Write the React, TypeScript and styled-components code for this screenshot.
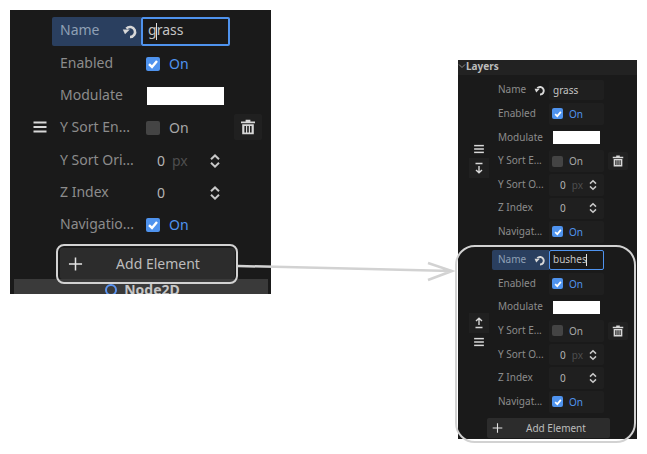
import React from 'react';
import styled, { createGlobalStyle, ThemeProvider } from 'styled-components';

type Sizes = {
  font: number;
  rowH: number;
  nameH: number;
  nameGap: number;
  nameLift: number;
  inputBorder: number;
  labelW: number;
  valueW: number;
  labelPad: number;
  valuePad: number;
  check: number;
  checkGap: number;
  swatchH: number;
  swatchInset: number;
  numPad: number;
  unitGap: number;
  handleW: number;
  handlePad: number;
  sideW: number;
  sideLift: number;
};

const large: Sizes = {
  font: 14,
  rowH: 32.2,
  nameH: 29,
  nameGap: 2,
  nameLift: 4,
  inputBorder: 2,
  labelW: 89,
  valueW: 89,
  labelPad: 8,
  valuePad: 5,
  check: 14,
  checkGap: 9,
  swatchH: 18,
  swatchInset: 6,
  numPad: 16,
  unitGap: 7,
  handleW: 42,
  handlePad: 18,
  sideW: 36,
  sideLift: 4,
};

const small: Sizes = {
  font: 10,
  rowH: 23.6,
  nameH: 20,
  nameGap: 2.2,
  nameLift: 2,
  inputBorder: 1.5,
  labelW: 57,
  valueW: 55,
  labelPad: 6,
  valuePad: 3,
  check: 11,
  checkGap: 6,
  swatchH: 13,
  swatchInset: 4,
  numPad: 11,
  unitGap: 6,
  handleW: 34,
  handlePad: 8,
  sideW: 28,
  sideLift: 2,
};

const GlobalStyle = createGlobalStyle`
  html, body {
    margin: 0;
    padding: 0;
    background: #fff;
  }
  body {
    font-family: "Noto Sans", "Liberation Sans", sans-serif;
  }
`;

const Page = styled.div`
  position: relative;
  width: 647px;
  height: 454px;
  overflow: hidden;
  background: #fff;
`;

const Window = styled.div<{ $x: number; $y: number; $w: number; $h: number }>`
  position: absolute;
  left: ${(p) => p.$x}px;
  top: ${(p) => p.$y}px;
  width: ${(p) => p.$w}px;
  height: ${(p) => p.$h}px;
  box-sizing: border-box;
  overflow: hidden;
  display: flex;
  flex-direction: column;
  background: #1a1a1a;
`;

const LargeBody = styled.div`
  padding-top: 7px;
  display: flex;
  flex-direction: column;
`;

const Block = styled.div`
  display: flex;
  align-items: center;
`;

const Handle = styled.div<{ $lift: number }>`
  width: ${({ theme }) => theme.handleW}px;
  box-sizing: border-box;
  padding-left: ${({ theme }) => theme.handlePad}px;
  margin-bottom: ${(p) => p.$lift}px;
  display: flex;
  flex-direction: column;
  align-items: center;
  color: #d8d8d8;
`;

const HandleButton = styled.div`
  width: 20px;
  height: 20px;
  display: flex;
  align-items: center;
  justify-content: center;
  background: #202020;
`;

const HandleBars = styled.div`
  height: 18px;
  display: flex;
  align-items: center;
`;

const Fields = styled.div`
  display: flex;
  flex-direction: column;
`;

const Row = styled.div`
  display: flex;
  height: ${({ theme }) => theme.rowH}px;
  width: ${({ theme }) => theme.labelW + theme.valueW}px;
  font-size: ${({ theme }) => theme.font}px;
  line-height: 1;
`;

const NameRow = styled(Row)`
  height: ${({ theme }) => theme.nameH}px;
  margin-bottom: ${({ theme }) => theme.nameGap}px;
`;

const Label = styled.div<{ $active?: boolean; $lift?: number }>`
  width: ${({ theme }) => theme.labelW}px;
  flex: none;
  box-sizing: border-box;
  padding: 0 0 ${(p) => p.$lift ?? 2}px ${({ theme }) => theme.labelPad}px;
  display: flex;
  align-items: center;
  justify-content: space-between;
  color: ${(p) => (p.$active ? '#8fa0b5' : '#8c8c8c')};
  background: ${(p) => (p.$active ? '#2a3f5f' : 'transparent')};
  border-radius: 2px 0 0 2px;
  white-space: nowrap;
  overflow: hidden;
`;

const RevertSlot = styled.span`
  display: flex;
  color: #d8d8d8;
  margin-right: 3px;
  margin-top: 2px;
`;

const Value = styled.div<{ $dim?: boolean }>`
  width: ${({ theme }) => theme.valueW}px;
  flex: none;
  box-sizing: border-box;
  display: flex;
  align-items: center;
  padding-left: ${({ theme }) => theme.valuePad}px;
  margin: 1px 0;
  background: ${(p) => (p.$dim ? '#1f1f1f' : 'transparent')};
  border-radius: 2px;
  color: #b4b4b4;
`;

const TextInput = styled.div<{ $focus?: boolean }>`
  width: ${({ theme }) => theme.valueW}px;
  flex: none;
  box-sizing: border-box;
  display: flex;
  align-items: center;
  padding-left: ${({ theme }) => theme.valuePad}px;
  color: #c4c4c4;
  background: ${(p) => (p.$focus ? '#1a1a1a' : '#1f1f1f')};
  border: ${({ theme }) => theme.inputBorder}px solid ${(p) => (p.$focus ? '#4f93ee' : 'transparent')};
  border-radius: 2px;
`;

const Caret = styled.span`
  display: inline-block;
  width: 1px;
  height: 1.2em;
  margin: 0 -0.5px;
  vertical-align: middle;
  background: #e0e0e0;
`;

const Check = styled.span<{ $on: boolean }>`
  width: ${({ theme }) => theme.check}px;
  height: ${({ theme }) => theme.check}px;
  flex: none;
  display: flex;
  align-items: center;
  justify-content: center;
  border-radius: 2px;
  background: ${(p) => (p.$on ? '#4f93ee' : '#444444')};
`;

const OnText = styled.span<{ $on: boolean }>`
  margin-left: ${({ theme }) => theme.checkGap}px;
  color: ${(p) => (p.$on ? '#4f93ee' : '#a8a8a8')};
`;

const Swatch = styled.div`
  flex: 1;
  height: ${({ theme }) => theme.swatchH}px;
  margin-left: ${({ theme }) => theme.swatchInset - theme.valuePad}px;
  margin-right: ${({ theme }) => theme.swatchInset}px;
  background: #fff;
`;

const NumberValue = styled.span`
  margin-left: ${({ theme }) => theme.numPad - theme.valuePad}px;
`;

const Unit = styled.span`
  margin-left: ${({ theme }) => theme.unitGap}px;
  color: #4e4e4e;
`;

const Spinner = styled.span`
  margin-left: auto;
  margin-right: ${({ theme }) => theme.swatchInset + 1}px;
  display: flex;
  color: #c8c8c8;
`;

const Side = styled.div`
  width: ${({ theme }) => theme.sideW}px;
  margin-bottom: ${({ theme }) => theme.sideLift}px;
  display: flex;
  justify-content: center;
  color: #d8d8d8;
`;

const TrashButton = styled.div`
  width: ${({ theme }) => theme.sideW - 8}px;
  height: ${({ theme }) => theme.sideW - 10}px;
  display: flex;
  align-items: center;
  justify-content: center;
  background: #202020;
  border-radius: 2px;
`;

const AddButton = styled.div<{ $w: number; $h: number; $left: number; $top: number; $textShift: number }>`
  width: ${(p) => p.$w}px;
  height: ${(p) => p.$h}px;
  margin: ${(p) => p.$top}px 0 0 ${(p) => p.$left}px;
  padding-left: ${(p) => p.$textShift}px;
  flex: none;
  box-sizing: border-box;
  position: relative;
  display: flex;
  align-items: center;
  justify-content: center;
  background: #2c2c2c;
  border-radius: 2px;
  color: #bcbcbc;
  font-size: ${({ theme }) => theme.font}px;
`;

const PlusSlot = styled.span<{ $left: number }>`
  position: absolute;
  left: ${(p) => p.$left}px;
  top: 50%;
  transform: translateY(-50%);
  display: flex;
  color: #e4e4e4;
`;

const NodeBar = styled.div`
  margin: 0 3px 0 4px;
  height: 24px;
  padding: 1px 0 0 3px;
  display: flex;
  justify-content: center;
  gap: 7px;
  box-sizing: border-box;
  background: #3a3a3a;
  color: #c6c6c6;
  font-size: 14px;
  font-weight: 700;
  line-height: 20px;
`;

const NodeRing = styled.span`
  width: 12px;
  height: 12px;
  margin-top: 4px;
  box-sizing: border-box;
  border: 2px solid #5b94f0;
  border-radius: 50%;
`;

const SectionHeader = styled.div`
  height: 15px;
  flex: none;
  box-sizing: border-box;
  padding-bottom: 3px;
  display: flex;
  align-items: center;
  background: #222222;
  color: #bdbdbd;
  font-size: 10px;
  font-weight: 700;
`;

const SmallBody = styled.div`
  padding-top: 5px;
  display: flex;
  flex-direction: column;
`;

const BlockGap = styled.div`
  height: 6px;
`;

const Outline = styled.div<{ $x: number; $y: number; $w: number; $h: number; $r: number }>`
  position: absolute;
  left: ${(p) => p.$x}px;
  top: ${(p) => p.$y}px;
  width: ${(p) => p.$w}px;
  height: ${(p) => p.$h}px;
  box-sizing: border-box;
  border: 2.5px solid #d2d2d2;
  border-radius: ${(p) => p.$r}px;
  pointer-events: none;
`;

const ArrowSvg = styled.svg`
  position: absolute;
  left: 0;
  top: 0;
  pointer-events: none;
`;

const RevertIcon = ({ size }: { size: number }) => (
  <svg width={size} height={size} viewBox="0 0 16 16" fill="none" stroke="currentColor" strokeWidth="2.6">
    <path d="M4.4 5.6A5 5 0 1 1 8 14" />
    <path d="M0.8 6.4h7L3 11.2z" fill="currentColor" stroke="none" />
  </svg>
);

const CheckIcon = ({ size }: { size: number }) => (
  <svg width={size} height={size} viewBox="0 0 14 14" fill="none" stroke="#fff" strokeWidth="2.4">
    <path d="M3 7.2 6 10l5-6" />
  </svg>
);

const BarsIcon = ({ size }: { size: number }) => (
  <svg width={size} height={size} viewBox="0 0 16 16" fill="currentColor">
    <rect x="1.5" y="2.5" width="13" height="2" />
    <rect x="1.5" y="7" width="13" height="2" />
    <rect x="1.5" y="11.5" width="13" height="2" />
  </svg>
);

const TrashIcon = ({ size }: { size: number }) => (
  <svg width={size} height={size} viewBox="0 0 16 16" fill="currentColor">
    <path d="M5.6 .8h4.8V2.4h4.6V4.2H1V2.4h4.6z" />
    <path
      d="M2.2 5.2h11.6v10H2.2zM4.4 7v6.4h1.6V7zm2.8 0v6.4h1.6V7zm2.8 0v6.4h1.6V7z"
      fillRule="evenodd"
    />
  </svg>
);

const SpinIcon = ({ size }: { size: number }) => (
  <svg width={size} height={size} viewBox="0 0 16 16" fill="none" stroke="currentColor" strokeWidth="2">
    <path d="M4 6.2 8 2.4l4 3.8M4 9.8l4 3.8 4-3.8" />
  </svg>
);

const PlusIcon = ({ size }: { size: number }) => (
  <svg width={size} height={size} viewBox="0 0 16 16" fill="currentColor">
    <path d="M7.2 1h1.6v6.2H15v1.6H8.8V15H7.2V8.8H1V7.2h6.2z" />
  </svg>
);

const MoveIcon = ({ up }: { up: boolean }) => (
  <svg width="12" height="12" viewBox="0 0 12 12" fill="none" stroke="currentColor" strokeWidth="1.4">
    {up ? (
      <path d="M6 8V1.5M3 4l3-2.8L9 4M2.5 10.5h7" />
    ) : (
      <path d="M6 4v6.5M3 8l3 2.8L9 8M2.5 1.5h7" />
    )}
  </svg>
);

const ChevronIcon = () => (
  <svg width="8" height="8" viewBox="0 0 8 8" fill="none" stroke="#8c8c8c" strokeWidth="1">
    <path d="M1 2.5 4 5.5 7 2.5" />
  </svg>
);

type ElementProps = {
  focused?: boolean;
  name: string;
  caretAt: number;
  labels: { sortEnabled: string; sortOrigin: string; navigation: string };
  iconSize: number;
  dimCells?: boolean;
  handle: React.ReactNode;
  handleLift: number;
  nameLift: number;
};

const ElementFields = ({
  focused,
  name,
  caretAt,
  labels,
  iconSize,
  dimCells,
  handle,
  handleLift,
  nameLift,
}: ElementProps) => (
  <Block>
    <Handle $lift={handleLift}>{handle}</Handle>
    <Fields>
      <NameRow>
        <Label $active={focused} $lift={nameLift}>
          Name
          <RevertSlot>
            <RevertIcon size={iconSize} />
          </RevertSlot>
        </Label>
        <TextInput $focus={focused}>
          <span>
            {name.slice(0, caretAt)}
            {focused && <Caret />}
            {name.slice(caretAt)}
          </span>
        </TextInput>
      </NameRow>
      <Row>
        <Label>Enabled</Label>
        <Value $dim={dimCells}>
          <Check $on>
            <CheckIcon size={iconSize - 2} />
          </Check>
          <OnText $on>On</OnText>
        </Value>
      </Row>
      <Row>
        <Label>Modulate</Label>
        <Value>
          <Swatch />
        </Value>
      </Row>
      <Row>
        <Label>{labels.sortEnabled}</Label>
        <Value $dim={dimCells}>
          <Check $on={false} />
          <OnText $on={false}>On</OnText>
        </Value>
      </Row>
      <Row>
        <Label>{labels.sortOrigin}</Label>
        <Value $dim={dimCells}>
          <NumberValue>0</NumberValue>
          <Unit>px</Unit>
          <Spinner>
            <SpinIcon size={iconSize} />
          </Spinner>
        </Value>
      </Row>
      <Row>
        <Label>Z Index</Label>
        <Value $dim={dimCells}>
          <NumberValue>0</NumberValue>
          <Spinner>
            <SpinIcon size={iconSize} />
          </Spinner>
        </Value>
      </Row>
      <Row>
        <Label>{labels.navigation}</Label>
        <Value $dim={dimCells}>
          <Check $on>
            <CheckIcon size={iconSize - 2} />
          </Check>
          <OnText $on>On</OnText>
        </Value>
      </Row>
    </Fields>
    <Side>
      <TrashButton>
        <TrashIcon size={iconSize} />
      </TrashButton>
    </Side>
  </Block>
);

const largeLabels = { sortEnabled: 'Y Sort En...', sortOrigin: 'Y Sort Ori...', navigation: 'Navigatio...' };
const smallLabels = { sortEnabled: 'Y Sort E...', sortOrigin: 'Y Sort O...', navigation: 'Navigat...' };

const App = () => (
  <Page>
    <GlobalStyle />

    <ThemeProvider theme={large}>
      <Window $x={10} $y={10} $w={261} $h={284}>
        <LargeBody>
          <ElementFields
            focused
            name="grass"
            caretAt={1}
            labels={largeLabels}
            iconSize={16}
            handleLift={4}
            nameLift={large.nameLift}
            handle={<BarsIcon size={16} />}
          />
          <AddButton $w={175} $h={31} $left={50} $top={7} $textShift={21}>
            Add Element
            <PlusSlot $left={8}>
              <PlusIcon size={15} />
            </PlusSlot>
          </AddButton>
          <NodeBar>
            <NodeRing />
            Node2D
          </NodeBar>
        </LargeBody>
      </Window>
    </ThemeProvider>

    <ThemeProvider theme={small}>
      <Window $x={458} $y={60} $w={179} $h={379}>
        <SectionHeader>
          <ChevronIcon />
          Layers
        </SectionHeader>
        <SmallBody>
          <ElementFields
            name="grass"
            caretAt={5}
            labels={smallLabels}
            iconSize={12}
            dimCells
            handleLift={6}
            nameLift={small.nameLift}
            handle={
              <>
                <HandleBars>
                  <BarsIcon size={12} />
                </HandleBars>
                <HandleButton>
                  <MoveIcon up={false} />
                </HandleButton>
              </>
            }
          />
          <BlockGap />
          <ElementFields
            focused
            name="bushes"
            caretAt={6}
            labels={smallLabels}
            iconSize={12}
            dimCells
            handleLift={0}
            nameLift={small.nameLift}
            handle={
              <>
                <HandleButton>
                  <MoveIcon up />
                </HandleButton>
                <HandleBars>
                  <BarsIcon size={12} />
                </HandleBars>
              </>
            }
          />
          <AddButton $w={123} $h={20} $left={29} $top={4.6} $textShift={15}>
            Add Element
            <PlusSlot $left={5}>
              <PlusIcon size={11} />
            </PlusSlot>
          </AddButton>
        </SmallBody>
      </Window>
    </ThemeProvider>

    <Outline $x={56} $y={244} $w={182} $h={40} $r={8} />
    <Outline $x={455} $y={245} $w={181} $h={198} $r={20} />
    <ArrowSvg width="647" height="454" fill="none" stroke="#d2d2d2" strokeWidth="2.5">
      <path d="M238 266 452 271M428 263 452 271 428 280" />
    </ArrowSvg>
  </Page>
);

export default App;
